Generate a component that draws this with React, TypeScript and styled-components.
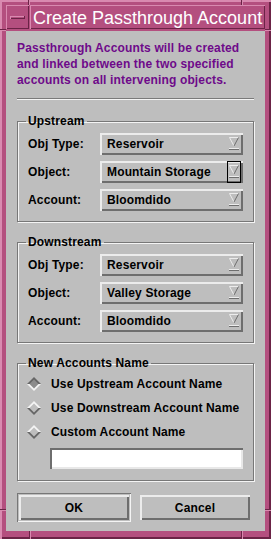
import React from "react";
import styled, { createGlobalStyle } from "styled-components";

const Global = createGlobalStyle`
  html, body { margin: 0; padding: 0; background: #bebebe; }
  * { box-sizing: border-box; }
`;

const PINK = "#b44f7f";
const PINK_LIGHT = "#d98ab0";
const PINK_DARK = "#6b2346";
const GREY = "#bebebe";
const LIGHT = "#ececec";
const DARK = "#6e6e6e";

const Window = styled.div`
  position: relative;
  width: 271px;
  height: 539px;
  background: ${PINK};
  box-shadow: inset 1px 1px 0 ${PINK_LIGHT}, inset 2px 2px 0 ${PINK_LIGHT},
    inset -1px -1px 0 ${PINK_DARK}, inset -2px -2px 0 ${PINK_DARK};
  padding: 5px 6px 8px 6px;
  display: flex;
  flex-direction: column;
  font-family: "Liberation Sans", Arial, sans-serif;
`;

const Notch = styled.div<{ $v?: boolean }>`
  position: absolute;
  background: ${PINK_DARK};
  ${(p) =>
    p.$v
      ? `width: 1px; box-shadow: 1px 0 0 ${PINK_LIGHT};`
      : `height: 1px; box-shadow: 0 1px 0 ${PINK_LIGHT};`}
`;

const TitleRow = styled.div`
  display: flex;
  gap: 1px;
  height: 24px;
`;

const MinButton = styled.div`
  width: 23px;
  display: flex;
  align-items: center;
  justify-content: center;
  box-shadow: inset 1px 1px 0 ${PINK_LIGHT}, inset -1px -1px 0 ${PINK_DARK};
`;

const MinBar = styled.div`
  width: 15px;
  height: 3px;
  background: ${PINK};
  box-shadow: inset 0 1px 0 ${PINK_LIGHT}, inset 0 -1px 0 ${PINK_DARK};
  border-left: 1px solid ${PINK_LIGHT};
  border-right: 1px solid ${PINK_DARK};
`;

const TitleLabel = styled.div`
  flex: 1;
  padding: 1px 0 0 3px;
  color: #ffffff;
  font-size: 18px;
  line-height: 24px;
  white-space: nowrap;
  overflow: hidden;
  box-shadow: inset 1px 1px 0 ${PINK_LIGHT}, inset -1px -1px 0 ${PINK_DARK};
`;

const Content = styled.div`
  margin-top: 2px;
  flex: 1;
  background: ${GREY};
  padding: 0 11px;
  display: flex;
  flex-direction: column;
  font-size: 12px;
  font-weight: bold;
  letter-spacing: 0.15px;
  color: #000;
`;

const Description = styled.p`
  margin: 0;
  padding-top: 9px;
  color: #6e0a8a;
  line-height: 16px;
`;

const Separator = styled.div`
  margin-top: 10px;
  height: 1px;
  background: #7a7a7a;
  box-shadow: 0 1px 0 #f4f4f4;
`;

const Group = styled.fieldset<{ $top: number }>`
  margin: ${(p) => p.$top}px 0 0 0;
  padding: 0 10px 10px 10px;
  border: 1px solid #777777;
  box-shadow: inset 1px 1px 0 #f4f4f4, 1px 1px 0 #f4f4f4;
  min-width: 0;
`;

const Legend = styled.legend`
  padding: 0 2px;
  margin-left: -2px;
  line-height: 14px;
`;

const FieldGrid = styled.div`
  margin-top: 5px;
  display: grid;
  grid-template-columns: 72px 143px;
  row-gap: 6px;
  align-items: center;
`;

const Label = styled.span``;

const Dropdown = styled.div`
  height: 22px;
  display: flex;
  align-items: center;
  justify-content: space-between;
  padding: 0 2px 0 7px;
  background: ${GREY};
  box-shadow: inset 2px 2px 0 ${LIGHT}, inset -2px -2px 0 ${DARK};
`;

const ArrowBox = styled.div<{ $focused?: boolean }>`
  width: 14px;
  height: 22px;
  display: flex;
  align-items: center;
  justify-content: center;
  border: 1px solid ${(p) => (p.$focused ? "#000" : "transparent")};
`;

const Arrow = () => (
  <svg width="10" height="14" viewBox="0 0 10 14">
    <polygon points="0,0 10,0 5,9" fill={GREY} />
    <polyline points="0.5,0.5 9.5,0.5" stroke={LIGHT} strokeWidth="1" fill="none" />
    <polyline points="0.5,0.5 5,9" stroke={LIGHT} strokeWidth="1" fill="none" />
    <polyline points="9.5,0.5 5,9" stroke={DARK} strokeWidth="1" fill="none" />
    <rect x="0" y="11" width="10" height="1" fill={LIGHT} />
    <rect x="0" y="12" width="10" height="1" fill={DARK} />
  </svg>
);

const RadioList = styled.div`
  margin-top: 4px;
  display: flex;
  flex-direction: column;
  gap: 4px;
`;

const RadioRow = styled.div`
  height: 20px;
  display: flex;
  align-items: center;
  gap: 10px;
  margin-left: -1px;
`;

const Diamond = ({ on }: { on?: boolean }) => (
  <svg width="14" height="14" viewBox="0 0 14 14">
    <polygon points="0,7 7,0 14,7" fill={on ? "#666666" : "#f4f4f4"} />
    <polygon points="0,7 7,14 14,7" fill={on ? "#f4f4f4" : "#666666"} />
    <polygon points="7,2.5 11.5,7 7,11.5 2.5,7" fill={on ? "#8c8c8c" : GREY} />
  </svg>
);

const TextField = styled.div`
  margin: 6px 0 1px 22px;
  width: 193px;
  height: 21px;
  background: #ffffff;
  box-shadow: inset 2px 2px 0 #6e6e6e, inset -2px -2px 0 #e8e8e8;
`;

const ButtonRow = styled.div`
  margin-top: 12px;
  display: flex;
  align-items: center;
  gap: 9px;
`;

const DefaultRing = styled.div`
  padding: 2px;
  box-shadow: inset 1px 1px 0 #777777, inset -1px -1px 0 #f4f4f4;
`;

const Button = styled.div`
  width: 110px;
  height: 25px;
  display: flex;
  align-items: center;
  justify-content: center;
  background: ${GREY};
  box-shadow: inset 2px 2px 0 ${LIGHT}, inset -2px -2px 0 ${DARK};
`;

type Field = { label: string; value: string; focused?: boolean };

const FieldGroup = ({ title, fields, top }: { title: string; fields: Field[]; top: number }) => (
  <Group $top={top}>
    <Legend>{title}</Legend>
    <FieldGrid>
      {fields.map((f) => (
        <React.Fragment key={f.label}>
          <Label>{f.label}</Label>
          <Dropdown>
            <span>{f.value}</span>
            <ArrowBox $focused={f.focused}>
              <Arrow />
            </ArrowBox>
          </Dropdown>
        </React.Fragment>
      ))}
    </FieldGrid>
  </Group>
);

export default function App() {
  return (
    <>
      <Global />
      <Window>
        <Notch $v style={{ left: 28, top: 0, height: 5 }} />
        <Notch $v style={{ left: 241, top: 0, height: 5 }} />
        <Notch style={{ left: 0, top: 29, width: 6 }} />
        <Notch style={{ right: 0, top: 29, width: 6 }} />
        <Notch style={{ left: 0, top: 509, width: 6 }} />
        <Notch style={{ right: 0, top: 509, width: 6 }} />
        <Notch $v style={{ left: 29, bottom: 0, height: 8 }} />
        <Notch $v style={{ left: 241, bottom: 0, height: 8 }} />
        <TitleRow>
          <MinButton>
            <MinBar />
          </MinButton>
          <TitleLabel>Create Passthrough Account</TitleLabel>
        </TitleRow>
        <Content>
          <Description>
            Passthrough Accounts will be created
            <br />
            and linked between the two specified
            <br />
            accounts on all intervening objects.
          </Description>
          <Separator />
          <FieldGroup
            title="Upstream"
            top={15}
            fields={[
              { label: "Obj Type:", value: "Reservoir" },
              { label: "Object:", value: "Mountain Storage", focused: true },
              { label: "Account:", value: "Bloomdido" },
            ]}
          />
          <FieldGroup
            title="Downstream"
            top={13}
            fields={[
              { label: "Obj Type:", value: "Reservoir" },
              { label: "Object:", value: "Valley Storage" },
              { label: "Account:", value: "Bloomdido" },
            ]}
          />
          <Group $top={13}>
            <Legend>New Accounts Name</Legend>
            <RadioList>
              <RadioRow>
                <Diamond on />
                Use Upstream Account Name
              </RadioRow>
              <RadioRow>
                <Diamond />
                Use Downstream Account Name
              </RadioRow>
              <RadioRow>
                <Diamond />
                Custom Account Name
              </RadioRow>
            </RadioList>
            <TextField />
          </Group>
          <ButtonRow>
            <DefaultRing>
              <Button>OK</Button>
            </DefaultRing>
            <Button>Cancel</Button>
          </ButtonRow>
        </Content>
      </Window>
    </>
  );
}
